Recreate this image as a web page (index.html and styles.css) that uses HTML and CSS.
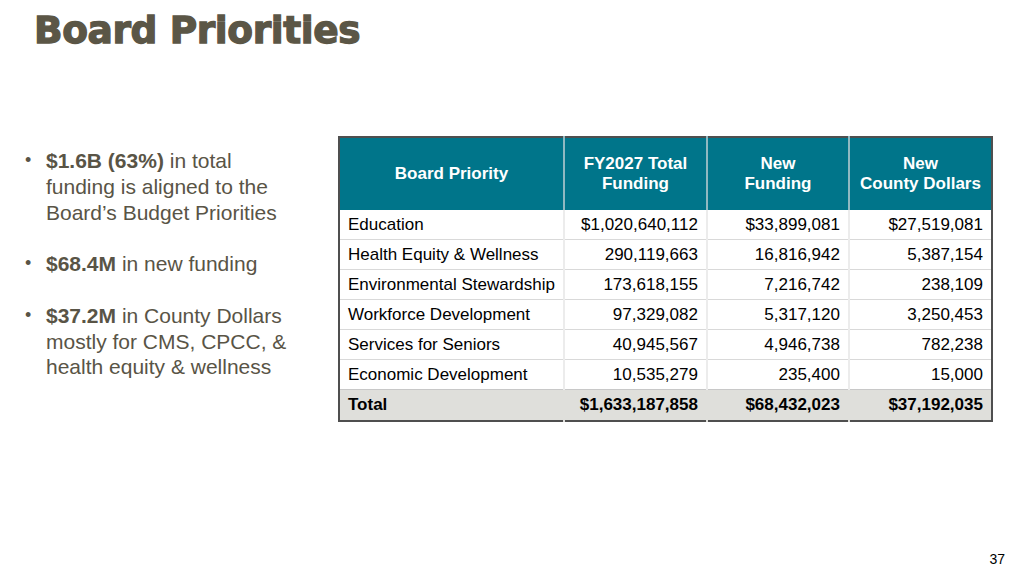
FILE: index.html
```html
<!DOCTYPE html>
<html>
<head>
<meta charset="utf-8">
<link rel="stylesheet" href="styles.css">
</head>
<body>
<div class="slide">
  <h1 class="title">Board Priorities</h1>
  <div class="content">
    <ul class="bullets">
      <li><b>$1.6B (63%)</b> in total funding is aligned to the Board’s Budget Priorities</li>
      <li><b>$68.4M</b> in new funding</li>
      <li><b>$37.2M</b> in County Dollars mostly for CMS, CPCC, &amp; health equity &amp; wellness</li>
    </ul>
    <table class="grid">
      <thead>
        <tr>
          <th class="c1">Board Priority</th>
          <th class="c2">FY2027 Total<br>Funding</th>
          <th class="c3">New<br>Funding</th>
          <th class="c4">New<br>County Dollars</th>
        </tr>
      </thead>
      <tbody>
        <tr><td>Education</td><td>$1,020,640,112</td><td>$33,899,081</td><td>$27,519,081</td></tr>
        <tr><td>Health Equity &amp; Wellness</td><td>290,119,663</td><td>16,816,942</td><td>5,387,154</td></tr>
        <tr><td>Environmental Stewardship</td><td>173,618,155</td><td>7,216,742</td><td>238,109</td></tr>
        <tr><td>Workforce Development</td><td>97,329,082</td><td>5,317,120</td><td>3,250,453</td></tr>
        <tr><td>Services for Seniors</td><td>40,945,567</td><td>4,946,738</td><td>782,238</td></tr>
        <tr><td>Economic Development</td><td>10,535,279</td><td>235,400</td><td>15,000</td></tr>
        <tr class="total"><td>Total</td><td>$1,633,187,858</td><td>$68,432,023</td><td>$37,192,035</td></tr>
      </tbody>
    </table>
  </div>
  <div class="pagenum">37</div>
</div>
</body>
</html>
```

FILE: styles.css
```css
html, body {
  margin: 0;
  padding: 0;
  background: #ffffff;
}
.slide {
  width: 1024px;
  height: 576px;
  position: relative;
  font-family: "Liberation Sans", Arial, sans-serif;
  overflow: hidden;
}
.title {
  margin: 0;
  padding: 8px 0 0 34px;
  font-family: "DejaVu Sans", "Liberation Sans", sans-serif;
  font-weight: 900;
  font-size: 37.5px;
  line-height: 44px;
  color: #5b5646;
  -webkit-text-stroke: 1.3px #5b5646;
  letter-spacing: -0.4px;
}
.content {
  display: flex;
  align-items: flex-start;
  padding: 84px 0 0 22px;
}
.bullets {
  list-style: none;
  margin: 0;
  padding: 0;
  width: 292px;
  margin-top: 12px;
  color: #595446;
  font-size: 21px;
  line-height: 25.8px;
}
.bullets li {
  position: relative;
  padding-left: 24px;
  padding-right: 14px;
  margin-bottom: 25.8px;
}
.bullets li::before {
  content: "•";
  position: absolute;
  left: 3px;
  top: 0;
  font-size: 18px;
}
.bullets b {
  font-weight: bold;
}
.grid {
  margin-left: 24px;
  border-collapse: collapse;
  border: 2px solid #4f4f4f;
  font-size: 17px;
  color: #000;
}
.grid th {
  background: #00758a;
  color: #fff;
  font-weight: bold;
  text-align: center;
  height: 72px;
  line-height: 20px;
  padding: 0;
  border-left: 2px solid #8fb9c1;
}
.grid th.c1 { border-left: none; width: 221px; }
.grid th.c2 { width: 141px; }
.grid th.c3 { width: 140px; }
.grid th.c4 { width: 141px; }
.grid td {
  height: 29px;
  padding: 0 8px;
  text-align: right;
  white-space: nowrap;
  border-top: 1px solid #d9d9d9;
  border-left: 2px solid #ececec;
}
.grid td:first-child {
  text-align: left;
  border-left: none;
}
.grid tbody tr:first-child td { border-top: none; }
.grid tr.total td {
  background: #dfdfdb;
  font-weight: bold;
  height: 30px;
  border-left-color: #dfdfdb;
  border-top: 1px solid #c8c8c8;
}
.pagenum {
  position: absolute;
  right: 19px;
  bottom: 9px;
  font-size: 14px;
  color: #000;
}
```
